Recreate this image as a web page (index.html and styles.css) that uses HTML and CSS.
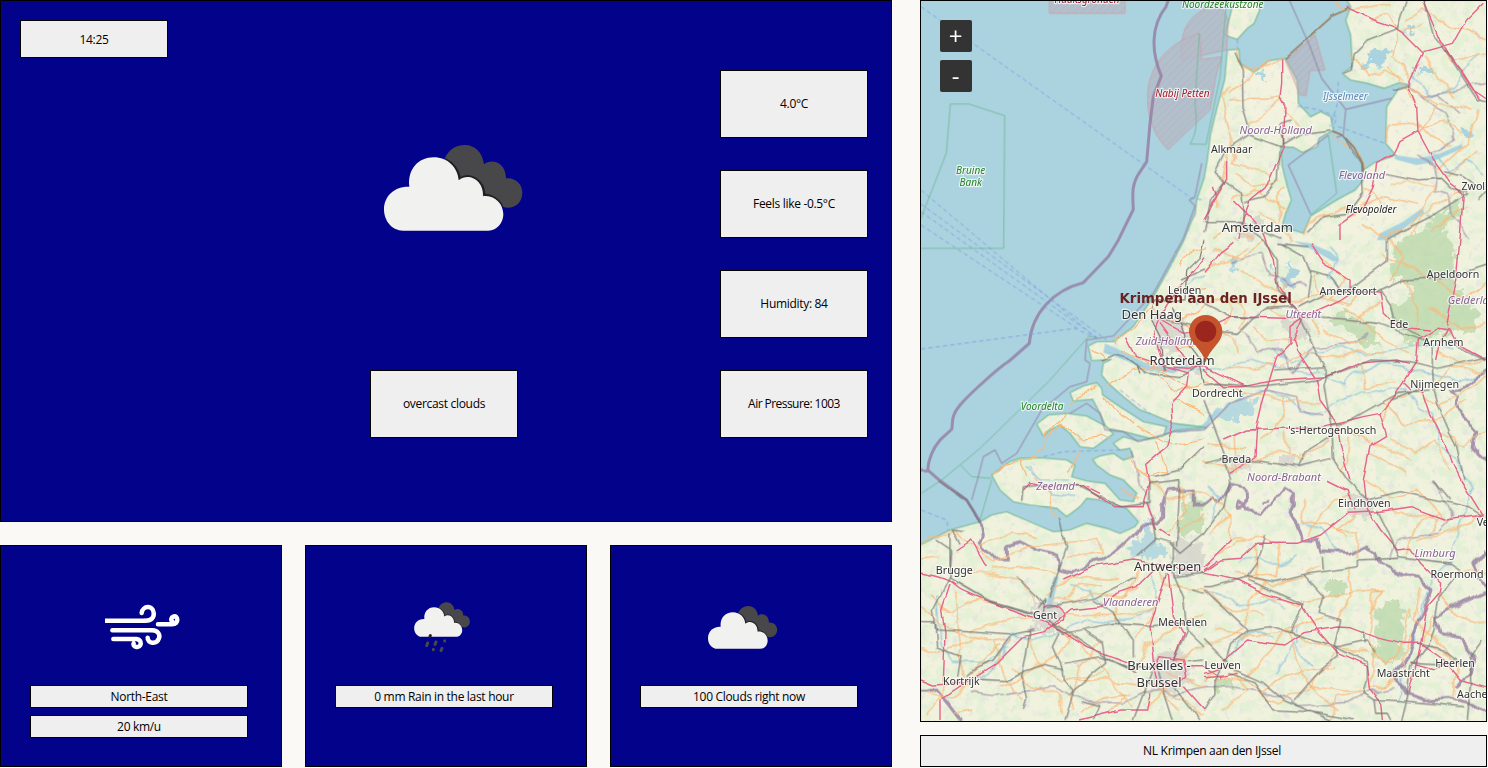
FILE: index.html
```html
<!DOCTYPE html>
<html lang="en">
<head>
<meta charset="utf-8">
<title>Weather</title>
<link rel="stylesheet" href="styles.css">
</head>
<body>
<main class="app">
  <div class="left">
    <section class="panel current">
      <div class="box time">14:25</div>
      <div class="sky">
        <svg class="sky-icon" viewBox="0 0 510 360">
          <g id="cloud">
            <path fill="#48484a" d="M222 92C232 62 255 45 285 45C315 45 338 68 342 103C365 84 408 97 408 145C435 142 457 162 457 188C457 214 439 233 413 233C405 233 397 229 390 224L250 190Z"/>
            <path fill="none" stroke="#202024" stroke-width="7" d="M226 88C248 98 266 120 269 147C300 126 341 150 343 194C365 195 387 209 396 228"/>
            <path fill="#f1f1f0" d="M99 302C66 302 42 273 42 238C42 200 72 168 118 170C112 118 145 82 191 82C233 82 263 112 266 151C298 126 341 152 339 199C371 193 400 220 400 253C400 278 382 302 355 302Z"/>
          </g>
        </svg>
        <div class="box tall">overcast clouds</div>
      </div>
      <div class="stats">
        <div class="box tall">4.0°C</div>
        <div class="box tall">Feels like -0.5°C</div>
        <div class="box tall">Humidity: 84</div>
        <div class="box tall pressure">Air Pressure: 1003</div>
      </div>
    </section>
    <div class="cards">
      <section class="panel card">
        <svg class="wind" viewBox="0 0 330 210" fill="none" stroke="#fff" stroke-width="13.500" stroke-linecap="round">
          <path stroke-linecap="butt" d="M45 92H166"/><path d="M166 92C186 92 193 80 191 68C189 45 158 46 155 69"/>
          <path d="M204 103H246C269 103 264 74 250 80C243 83 242 91 247 94"/>
          <path d="M67 121H187C204 121 211 134 207 145C199 166 172 160 173 143"/>
          <path d="M70 147H140C158 149 155 173 139 171C131 170 129 163 131 160"/>
        </svg>
        <div class="box">North-East</div>
        <div class="box">20 km/u</div>
      </section>
      <section class="panel card">
        <svg class="rain" viewBox="0 0 270 210">
          <use href="#cloud" transform="translate(25.500 18.500) scale(.403)"/>
          <g stroke="#48484a" stroke-width="9" stroke-linecap="round"><path d="M83 159L80 167M108 156L105 163M126 175L123 182M134 152V153M100 178V179"/><path stroke="#202024" d="M91 137L90 139"/></g>
        </svg>
        <div class="box">0 mm Rain in the last hour</div>
      </section>
      <section class="panel card">
        <svg class="clouds" viewBox="0 0 330 210"><use href="#cloud" transform="translate(33 25.500) scale(.5)"/></svg>
        <div class="box">100 Clouds right now</div>
      </section>
    </div>
  </div>

  <div class="right">
    <section class="map">
      <svg class="tiles" viewBox="3 3 1695 2160">
        <defs>
          <path id="land" d="M922 150L957 148L960 190L1002 217L1047 182L1095 175L1132 240L1135 310L1172 350L1202 335L1232 350L1240 390L1197 415L1192 440L1147 457L1120 442L1082 440L1087 500L1102 560L1114 600L1097 640L1084 685L1120 690L1150 700L1172 648L1250 600L1305 570L1330 540L1330 510L1365 487L1427 465L1397 430L1400 320L1437 265L1472 255L1437 248L1392 265L1342 250L1292 240L1267 220L1297 200L1292 105L1277 60L1292 20L1280 0H1704V2166H0V1635L90 1590L180 1565L215 1545L260 1535L340 1570L400 1595L450 1590L500 1570L560 1585L600 1600L645 1580L655 1565L620 1525L540 1500L500 1495L480 1520L440 1550L410 1525L330 1515L280 1505L240 1470L215 1425L270 1385L300 1375L360 1373L440 1380L465 1395L455 1430L500 1443L555 1450L600 1500L640 1505L650 1480L610 1440L570 1425L530 1395L518 1378L540 1368L580 1360L610 1380L640 1370L630 1345L600 1350L580 1330L610 1310L650 1322L710 1314L770 1290L860 1282L760 1270L690 1240L660 1230L610 1190L565 1150L545 1125L550 1090L575 1078L515 1082L505 1038L530 1025L580 1025L640 980L700 890L745 810L790 725L812 670L826 640L830 600L852 535L862 480L872 400L892 320L914 240Z
            M942 0L927 60L917 105L932 112L952 118L982 85L1002 70L1019 30L1012 0Z
            M450 1178L490 1158L530 1148L545 1165L548 1185L600 1220L670 1265L740 1280L730 1308L690 1315L620 1297L560 1285L540 1240L518 1198L460 1203Z
            M350 1272L385 1245L440 1240L500 1248L560 1280L580 1302L520 1345L480 1340L450 1300L420 1275L385 1293L370 1308Z"/>
          <clipPath id="landClip"><use href="#land"/></clipPath>
          <filter id="patches" x="0" y="0" width="100%" height="100%">
            <feTurbulence type="fractalNoise" baseFrequency=".03" numOctaves="6" seed="7"/>
            <feColorMatrix values="0 0 0 0 .7  0 0 0 0 .86  0 0 0 0 .62  0 8 0 0 -3.900"/>
          </filter>
          <filter id="towns" x="0" y="0" width="100%" height="100%">
            <feTurbulence type="fractalNoise" baseFrequency=".045" numOctaves="4" seed="21"/>
            <feColorMatrix values="0 0 0 0 .76  0 0 0 0 .76  0 0 0 0 .76  9 0 0 0 -5.600"/>
          </filter>
          <filter id="rough" x="-5%" y="-5%" width="110%" height="110%">
            <feTurbulence type="fractalNoise" baseFrequency=".035" numOctaves="4" seed="4"/>
            <feDisplacementMap in="SourceGraphic" scale="60" xChannelSelector="R" yChannelSelector="G"/>
          </filter>
          <filter id="wiggle" filterUnits="userSpaceOnUse" x="0" y="0" width="1704" height="2166" color-interpolation-filters="sRGB">
            <feTurbulence type="fractalNoise" baseFrequency=".016" numOctaves="2" seed="9"/>
            <feDisplacementMap in="SourceGraphic" scale="34" xChannelSelector="R" yChannelSelector="G"/>
          </filter>
          <filter id="wiggleLight" filterUnits="userSpaceOnUse" x="0" y="0" width="1704" height="2166" color-interpolation-filters="sRGB">
            <feTurbulence type="fractalNoise" baseFrequency=".014" numOctaves="2" seed="2"/>
            <feDisplacementMap in="SourceGraphic" scale="16" xChannelSelector="R" yChannelSelector="G"/>
          </filter>
          <pattern id="hatch" width="16" height="16" patternUnits="userSpaceOnUse" patternTransform="rotate(45)"><rect width="16" height="16" fill="#b9a9b8" fill-opacity=".8"/><path d="M0 0V16" stroke="#d98c94" stroke-width="4"/></pattern>
        </defs>
        <rect class="sea" width="1704" height="2166"/>
        <use href="#land" class="land"/>
        <g clip-path="url(#landClip)">
          <rect width="1704" height="2166" filter="url(#patches)" opacity=".5"/>
          <path fill="#f3f1df" opacity=".75" d="M1400 320L1437 265L1472 258L1540 340L1585 410L1570 440L1480 465L1430 463L1398 430ZM1340 510L1430 480L1560 500L1530 600L1420 670L1330 710L1260 700L1320 600ZM960 190L1000 217L1095 178L1130 240L1132 320L1080 400L1000 370L965 300Z"/>
          <rect width="1704" height="2166" filter="url(#towns)" opacity=".6"/>
          <g filter="url(#rough)">
            <path class="wood" d="M1425 715L1500 690L1560 690L1600 740L1604 850L1640 880L1680 950L1650 1000L1590 990L1520 1030L1450 1030L1460 990L1410 950L1420 915L1480 890L1460 840L1410 830ZM1220 950L1270 920L1290 970L1350 970L1385 1045L1330 1030L1270 985ZM1360 1830L1420 1790L1455 1825L1435 1990L1370 1980ZM1220 1740H1270V1790H1225ZM1520 670L1580 620L1630 600L1620 640L1560 700L1520 710ZM770 1560L820 1480L850 1500L850 1580L790 1620ZM880 2040H935V2070H880Z"/>
            <path class="town" d="M990 650L1030 660L1010 720H940L950 680ZM700 960L760 930L800 980L790 1060L720 1050ZM1080 960L1140 950L1170 1000L1110 1030ZM780 1070H850V1110L790 1120ZM760 1620L850 1630L840 1720L770 1730ZM690 1970L780 1950L820 2010L760 2090L690 2060ZM340 1810H420V1890H340ZM1290 1480L1380 1500L1340 1560L1290 1540ZM1060 1370L1130 1360L1150 1400H1070ZM930 1360H985V1410H930Z"/>
            <path class="lake" d="M1330 200L1360 155L1410 150L1395 180L1370 200ZM1485 215L1510 192L1535 215L1500 226ZM1620 385L1650 378L1660 398L1630 405ZM1092 810L1105 790L1120 810L1125 860L1090 850ZM1095 840L1125 830L1120 870L1090 865ZM920 790L950 770L945 805ZM1040 800L1055 785V820ZM1010 225L1030 215L1038 232ZM1445 95L1485 80L1470 108Z"/>
            <path class="lake" opacity=".8" d="M870 1250L920 1210L1000 1190L1005 1230L950 1260L890 1265ZM630 1640L660 1620L670 1570L700 1570V1620L745 1660V1680L690 1675L635 1678Z"/>
          </g>
          <path class="lake" d="M1425 465L1495 475L1560 460L1625 432L1628 445L1530 488L1490 495L1425 478ZM1380 700L1450 665L1505 625L1514 638L1460 680L1400 720H1370ZM1120 723L1170 730L1230 755L1260 780L1240 785L1180 750ZM375 1825L402 1730H416L395 1825ZM555 1030L600 1050L680 1090L760 1105L820 1090L760 1120L680 1108L600 1075L550 1058Z"/>
          <g class="river" filter="url(#wiggle)">
            <path class="wide" d="M740 1287L800 1288L850 1276L890 1240"/>
            <path d="M552 1055C620 1065 680 1130 740 1110S810 1100 850 1115L900 1100L980 1080L1060 1100L1130 1110L1200 1120L1270 1150L1320 1110L1380 1095L1450 1105L1530 1120L1600 1140L1704 1120M1060 1050L1120 1090L1200 1050L1260 1040L1330 1060L1400 1055L1460 1040L1520 1030L1600 1050M1010 1170L1100 1185L1150 1240L1220 1245L1260 1200L1330 1170L1400 1180L1450 1160L1500 1220L1540 1240L1560 1340L1620 1390L1660 1470L1620 1560L1590 1680L1540 1730L1500 1830L1480 1920L1450 2000L1440 2100"/>
            <path d="M1140 1560L1200 1590L1260 1660M960 1690L1010 1665L1080 1700L1130 1670M930 1970L960 1920L1010 1890L1060 1920M1060 2020L1090 1980L1120 1930L1150 1960L1180 2000M1140 1870L1130 1930M870 1780L980 1820L1050 1790L1090 1830M690 1730L720 1760L715 1820L640 1850L580 1870L500 1860L430 1890L340 1920L270 1900L230 2000L160 2040M50 1780L60 1930L100 1990L200 1990L260 1940M450 1760L510 1770L540 1820M460 1490L390 1480L360 1450L330 1400M320 1400L350 1440L450 1440M860 1450L900 1490L880 1560M1240 740L1250 790L1230 830L1260 870M850 820L800 850L820 910M1480 220L1530 290L1600 260L1670 160M1680 520L1640 480L1590 510L1540 470"/>
          </g>
        </g>
        <use href="#land" class="coast"/>

        <g class="zone"><path d="M388 0V40H615V0M782 180C780 100 800 50 860 25L895 0L925 60L920 150Z"/><path d="M838 100C740 130 680 200 683 300C684 360 705 410 744 449L870 330L890 220L905 170L845 178Z"/><path d="M1095 180L1185 105L1215 210L1170 212L1158 287L1140 285Z"/></g>
        <g class="reserve">
          <path d="M3 655L79 459L91 312H147L254 347L251 745H3M838 100L825 310C832 370 830 400 810 432L858 433L900 230L920 0M3 1480L65 1440L180 1345L390 1140L505 1010L530 1010M122 1395L155 1430L215 1435M215 1440L180 1560M1225 405L1250 580L1172 645"/>
        </g>
        <g class="border thick">
          <path d="M745 0L738 20C690 80 695 160 724 228L700 290L690 370L680 485L660 515C635 550 637 580 640 628L595 720L565 770L490 848C400 870 335 940 328 1030L265 1085C240 1100 150 1180 120 1215S100 1270 95 1288L60 1320C30 1355 25 1385 23 1410L60 1442L140 1500L180 1565"/>
          <path filter="url(#wiggle)" d="M180 1565L187 1600L180 1630L190 1650L220 1677H265V1640L300 1625L350 1650L410 1665L418 1705L460 1715L520 1685L550 1680L600 1640L650 1590L660 1570L710 1575L725 1560V1520L745 1475L820 1470V1515L850 1515L880 1490L900 1510L930 1455L975 1465L978 1520L950 1525L955 1500L985 1530L1030 1540L1060 1500L1080 1490L1095 1465L1120 1480V1510L1110 1540L1130 1570L1150 1615L1190 1620L1200 1655L1290 1660L1340 1635L1370 1650L1380 1690L1440 1725L1500 1735L1530 1770L1510 1830L1480 1900L1460 1970L1425 2020L1455 2080L1510 2100L1590 2095L1650 2110L1704 2140"/>
          <path filter="url(#wiggle)" d="M3 1410L23 1410M1704 1650L1665 1700L1700 1770L1600 1820L1550 1850L1560 1900L1620 1910L1660 1960L1650 2020L1610 2060M1704 1390L1665 1350L1670 1290L1635 1250L1600 1220L1610 1190L1590 1170L1630 1160L1670 1130L1704 1110M3 2080L50 2070L90 2120L125 2166M1030 1505L1043 1500"/>
        </g>
        <g class="border thin">
          <path d="M1108 0L1170 140L1205 235L1277 328L1415 295M1277 328L1270 405L1250 412M1225 405L1105 495L1172 643M845 490L825 590L808 600L825 618L790 715L700 880L580 1008L500 1020L495 1080L510 1090L500 1145L450 1160L365 1230L290 1360L245 1390L225 1350L190 1370L172 1440L155 1500M450 1240L500 1210L540 1240L555 1290L610 1295L655 1325L760 1295L852 1290L930 1210L1040 1170L1130 1190L1140 1235L1210 1245"/>
          <path filter="url(#wiggle)" d="M930 790L1030 760L1055 830L1110 860L1160 850M975 1000L1015 1060L1080 1050L1120 1120L1180 1040L1290 1030L1350 1000M1490 470L1550 500L1540 570L1590 580L1600 640L1650 720M1470 260L1510 290L1550 280L1620 340M1530 470L1600 420L1570 340L1510 290L1640 260L1704 250M1415 1680L1430 1620L1550 1600L1600 1550L1540 1440M640 1350L655 1420L700 1550M150 2080L220 2090L280 2080L400 2060L480 2100L600 2110L680 2070L760 2080L852 2060L930 2060L1060 2080L1130 2120L1290 2110L1350 2080L1420 2060"/>
        </g>
        <g class="ferry"><path d="M3 20L815 595L852 600M3 570L530 1015M3 612L560 1020M3 635L540 1020M3 675L480 990M3 1047L465 985L530 1015M1255 245L1250 320L1230 380M1132 318L1200 330L1250 350L1240 385M1255 380L1395 430M370 1370L430 1355L600 1350M600 1170L690 1240M3 1530L80 1560L85 1590M952 118V145"/></g>

        <g class="minor" filter="url(#wiggle)">
          <g transform="translate(852 0)"><path d="M100 150L110 190L150 217L243 175M80 260L50 290L80 430L60 530L40 620M75 280L200 180M75 297L200 290L230 285M135 375L235 290M240 330L300 385L230 405M100 430L85 490L200 520M90 520L150 560L230 540M80 600L150 570L200 600L250 640M170 640L230 670L260 720M290 710L350 650L440 620M430 640L560 590L640 610M480 560L540 620M470 670L560 720M560 550L690 550L650 640L560 710M640 370L740 440M650 380L560 370L545 430M650 390L710 360L770 400M615 260L700 310L800 330M500 60L550 40L580 90L570 170L620 230M440 160L500 230L540 210L600 240M430 30L560 10M600 60L660 30L700 60L846 120M590 100L660 70M700 110L740 180L846 160M660 160L710 240L750 290M700 310L680 350L650 400M700 510L790 430L820 330M730 530L820 450M385 400L460 450L478 510M390 0L430 30M610 700L690 620L780 570M690 700L720 650L790 620M30 720L80 680L150 710M240 560L215 600L230 660M550 200L640 300"/></g>
          <g transform="translate(852 720)"><path d="M0 90L80 60L130 20M30 30L110 60L180 0M110 100L180 130L260 180L380 160M90 170L130 220L110 270M0 190L60 170L90 200L60 250M150 250L190 310L280 290M50 280L90 300L100 340M60 370L140 390L210 370M230 380L300 340L430 350L460 330L540 340M360 60L420 120L380 180M330 100L350 170L440 200L470 150M450 240L530 180M430 210L560 310L620 340M360 270L430 310L480 300M470 370L480 440L570 430M0 420L70 440L190 470L350 490M230 460L240 520L170 600M240 570L255 650M90 590L100 700M10 620L130 620M0 660L90 690L200 640L300 650L370 600M400 560L500 600L620 660M430 590L420 700M540 490L600 550L700 540L790 480M560 600L640 640L690 600L740 690M530 40L700 120L780 180L846 130M560 0L600 50L560 120M600 120L640 200L630 280M680 200L780 270L846 250M690 330L780 380L846 360M640 440L700 500L780 450L846 410M700 570L780 620L846 560M500 640L600 700M700 440L740 380L846 400M620 460L560 480L540 550M250 130L200 210L260 240M300 220L350 280"/></g>
          <g transform="translate(0 720)"><path d="M585 305L640 260L690 200L720 220M600 330L680 370L740 390M560 440L640 390L700 380L800 440L852 450M450 500L530 430M545 470L640 550M370 590L430 540L440 520M355 640L375 600L430 550L490 600L570 590M215 700L300 660L350 655M300 660L320 710M440 700L480 620M700 400L770 460L850 430M650 560L760 620L852 600M700 600L740 700M620 640L680 710L740 690M750 480L852 520M520 330L555 355M780 80L820 30L852 20M730 180L780 150L852 140M740 240L852 280M780 250L852 190M770 330L852 320"/></g>
          <g transform="translate(0 1440)"><path d="M3 195L90 150L170 200L210 250L280 220L330 200L420 190L540 175L550 220L440 235M210 270L330 260L420 280M0 240L60 235M180 200L280 150L350 170M130 270L210 280L300 300L350 360M100 330L110 420L130 600M30 340L80 400L170 360L230 370M0 380L70 440L200 480L270 470M240 490L180 550L140 590M150 450L230 430L340 400M220 480L250 580L300 660M390 370L520 340L620 350L650 270M380 350L460 290L600 300M430 360L480 310L550 320M430 400L560 410L640 400L720 380M400 430L450 480L420 520L310 590L240 620M330 470L360 560L420 600L550 580M420 430L540 560L640 680M270 560L330 620L420 640L430 700M0 500L50 520L180 470M0 640L100 650L180 570M20 700L80 610L150 620M100 700L160 690M460 600L560 600L680 620M480 700L550 650L630 640M550 480L480 560L450 690M580 430L600 360L650 320M650 480L690 420L720 350M640 580L680 500L760 440L852 400M700 250L750 320L852 330M780 160L852 100M780 20L800 90L750 160M690 0L740 60L852 30M600 30L650 50M760 540L852 500M690 610L780 690M720 620L852 700M740 580L852 620M750 600L690 680M340 0L390 40L415 110M620 640L560 700"/></g>
          <g transform="translate(852 1440)"><path d="M0 30L80 100L80 180L180 170L230 200L220 290L130 290M80 100L20 160M130 180L30 220M300 60L290 120L380 140L420 170M310 160L390 60L440 50M460 100L390 150L460 160L460 230M480 0L560 50L640 30L730 130M540 60L580 100L700 120L680 160M640 180L720 160L840 110M610 220L640 130L700 100M150 200L160 300L200 320L290 290L350 260M100 270L180 310L130 360L130 440L50 490L0 490M170 340L280 380L300 360L430 340L540 330M430 250L440 350L400 420M360 350L430 340M490 490L510 340L540 330L500 390M620 380L600 480L550 560L490 490M110 470L250 460L380 500L490 510M250 460L320 620L390 520M30 590L130 600L220 670L320 620L490 640M170 640L230 590L390 560M320 620L400 690M480 640L400 650L380 720M510 500L500 630L580 600M650 320L630 420L700 480L740 540M700 340L760 410L846 430M620 460L590 540L630 600M690 500L760 560L750 650M690 400L660 510M740 280L846 280M540 620L600 570M0 330L60 380L170 400M30 450L120 460M0 600L60 540L130 630L60 690M100 600L160 560L250 450L350 410"/></g>
        </g>
        <g class="major" filter="url(#wiggleLight)">
          <path d="M0 1719C60 1730 90 1740 110 1760S300 1840 380 1865L500 1940L630 1990M90 1755L65 1830L75 1900L70 2050M60 2160L60 2100L120 2060L230 1990L310 1910L370 1895L450 1830L540 1820L590 1780L650 1760L700 1710L760 1690M430 1740L520 1700L640 1680L750 1700L852 1720M110 1650L155 1620L200 1700M705 2000L690 1880L740 1720M745 1720L760 1850L790 1900L760 1980M700 2010L720 1970L790 1980L800 2030L770 2060L710 2050L700 2010M800 2000H852L900 2030L950 2020M790 2060L852 2130M3 2040L40 2055L130 2050M480 2160L600 2130L680 2130L690 2080M370 1820C400 1800 440 1830 430 1860L390 1880M310 1470L330 1450L370 1460L490 1460L580 1520H670L690 1450L680 1390L740 1340L760 1270L755 1210L800 1160L805 1120L740 1100L650 1070L620 1010M500 1460L540 1480M720 1590L750 1610"/>
          <path d="M735 1110L700 1000L720 950L770 870L830 800L852 770M740 1100L800 1105L852 1100L980 1160M720 960L790 1000L852 990L940 950L1100 955L1150 950L1260 900L1290 880M720 970L800 1080M852 820L900 760L940 730M870 620L920 540L920 480M852 660L890 590L880 560M1085 175V250L1080 290L1095 320L1090 440L1040 560L990 600L970 650L960 720M940 600L990 650L1030 700L1060 780L1070 850L1100 900L1150 950L1120 1020L1130 1050L1190 1140L1200 1200L1250 1270L1260 1330L1290 1440M1150 950L1110 980L1110 1030L1070 1070L1030 1200L1010 1280L1005 1370L930 1420M852 1110L910 1160L970 1160L1070 1140L1220 1130L1310 1090L1430 1080L1470 1090M910 1320L980 1290L1080 1285H1180L1290 1260L1330 1250L1380 1240L1420 1190L1490 1080L1495 1020L1550 985L1590 990L1610 1030L1704 1080M1290 870L1380 880L1390 940L1430 980L1530 990M1170 730L1210 790L1290 840L1290 870M1580 980L1610 820L1620 720M1490 1160L1510 1180L1530 1240L1580 1340L1600 1400L1620 1440M1470 1170L1450 1150M1380 1240L1400 1310L1350 1340L1330 1440M1585 990L1560 1030L1550 1080M1280 20L1320 40L1360 60L1420 80L1450 100L1510 160L1490 200L1465 255L1490 320L1494 395L1440 425L1420 465L1370 490L1360 560L1330 620L1260 670L1260 720M1510 155L1600 130L1640 60L1690 10M1494 395L1540 480L1590 550L1630 580L1620 720M1510 0L1560 120L1660 270L1704 300M1574 150L1630 220L1680 300M680 1510L710 1590"/>
          <g transform="translate(852 1440)"><path d="M0 275L50 240L110 235L160 190H280L350 165L430 100L520 95L620 80L730 120L830 105M0 280L100 300L180 340L290 375L340 450L400 520L490 560L500 630L530 670L535 720M0 580L70 560M60 540L130 480L240 495L300 455L400 438L440 440L520 470L600 490H650L720 540L770 600L846 620M370 0L430 30L450 90M480 0L490 90L530 150L580 210L620 205L650 250L710 310L705 340L670 380L650 490L640 540L615 640M770 0L835 105M40 240L0 270M0 260L80 180M620 550L690 570L720 550M0 590L60 585"/></g>
        </g>
        <g class="rail" filter="url(#wiggleLight)">
          <g transform="translate(852 0)"><path d="M90 155L115 210L117 320L133 375L130 405L65 450L30 520L65 550L110 580L118 630L115 670L180 720M133 405L230 440L300 400L380 390M260 360L230 370L240 435M225 450L220 540L180 590L120 605M60 550L20 600L0 700M0 665H110L230 715M385 393L415 405L470 490L475 580L430 640L360 650L310 700M545 520L640 540L710 535L740 565L790 575M720 515L780 530L820 560M790 580L680 650L600 690L550 718M820 600L846 570M660 0L690 110L740 175L820 300L846 305M606 0L580 85L490 120L450 160L445 210L415 220M618 256L570 270"/></g>
          <g transform="translate(852 720)"><path d="M180 0L220 60L220 150L280 215L370 400L360 440L380 550L385 650L430 720M230 10L300 50L320 100L310 170M220 10L310 20M320 95L380 110L410 150M280 200L350 165L430 150L550 60L550 0M410 155H520L600 120L740 110L846 75M525 150L560 200L570 240L650 290M300 230L420 240L520 250L680 310M0 190L80 230L150 235L190 205L270 200M0 270L100 280L150 230M0 435L40 430L150 440L340 420L420 390L500 360L620 365L700 385L846 350M685 320V380L690 450L700 490L760 630L780 720M680 450L580 460L420 550L380 555M740 310L846 360M0 480L60 640L80 720M60 655L0 670M50 655L180 665L280 680L380 655M280 680L300 640L380 590M240 190V160M210 390L365 380M640 450L560 480"/></g>
          <g transform="translate(0 720)"><path d="M852 0L840 50L800 90L795 180L700 180L690 230L720 290L730 390M852 370L780 410L680 400L620 355L585 345L545 360M852 370L800 300L760 200M660 400L650 375M852 430L840 370M852 620L780 690L700 710M780 120L852 90M730 240L852 270"/></g>
          <g transform="translate(0 1440)"><path d="M60 0L140 60L180 125M50 180L95 210L90 295L210 365L370 410L460 465L570 540L650 580M90 160L90 290L40 390L50 450L140 455L270 465L340 450M0 425H45L50 500L120 530L110 590M120 190L100 150L135 155M105 305L200 360L350 400M140 590L160 570L220 540L270 470M180 595L265 600L310 575L370 555L430 570M380 410L430 460L580 430L700 440L780 430L852 440M380 380L520 355L650 290M515 360L580 400L640 480V530M370 370L290 290M370 400L375 355L355 380M420 460L400 500L425 560L430 600L460 635L435 720M430 550L540 530L620 560L700 560M490 450L550 490L560 550L450 640M330 450L320 520L305 590L320 660L310 690M480 665L540 680L520 720M760 280L790 350L800 450L760 540M750 190L780 220L852 160M780 0L770 200M760 290L852 280M820 330L852 340M800 450L852 500M800 545L852 540M695 575L640 720M710 560L760 720M760 620L840 720M650 230L710 175L760 190V280M700 110L710 180M305 60L310 20L370 15L480 20L600 80L690 70V10L780 0M430 170L440 200L390 350M415 110L430 180"/></g>
          <g transform="translate(852 1440)"><path d="M75 0L60 80L0 165M430 0L490 60L590 35L700 60L790 80L835 110M520 90L550 150L585 230L740 250L770 270L705 350L690 450L675 490L620 560L610 640L590 720M585 235L460 240V260L290 285L210 305L130 290L20 320H0M185 165L160 250L130 290M0 330L130 450L80 490L65 540L30 600V640L0 690M130 450L200 440L400 500L490 480L510 520M300 285L360 350L345 400L410 420L390 500L490 550V600L480 640L510 660L550 660L620 665L780 680M130 300L300 375L270 430L260 460M395 500L400 530L350 570L270 660M0 475L65 540L90 570L180 610L240 660L380 720M70 580L150 605L210 690L320 695L450 720M640 490L700 500L780 560M620 550L710 555M835 480L800 530V600L790 720M690 0L740 60M480 450V490M355 230L358 270M510 660L515 700H550L560 720"/></g>
          <path class="dam" d="M1095 175L1235 50L1290 25M1237 393L1270 407L1300 440L1325 490L1328 510"/>
        </g>

        <g class="lb sm"><text x="935" y="460">Alkmaar</text><text x="794" y="883">Leiden</text><text x="1284" y="886">Amersfoort</text><text x="1599" y="834">Apeldoorn</text><text x="1437" y="985">Ede</text><text x="1570" y="1038">Arnhem</text><text x="1544" y="1164">Nijmegen</text><text x="892" y="1190">Dordrecht</text><text x="1237" y="1301">'s-Hertogenbosch</text><text x="949" y="1389">Breda</text><text x="1333" y="1520">Eindhoven</text><text x="1611" y="1734">Roermond</text><text x="103" y="1721">Brugge</text><text x="375" y="1856">Gent</text><text x="788" y="1878">Mechelen</text><text x="908" y="2007">Leuven</text><text x="1450" y="2031">Maastricht</text><text x="1605" y="2000">Heerlen</text><text x="124" y="2056">Kortrijk</text><text x="1673" y="571">Zwolle</text><text x="1667" y="2095">Aachen</text><text x="1712" y="1578">Venlo</text></g>
        <g class="lb lg"><text x="1012" y="695">Amsterdam</text><text x="695" y="956">Den Haag</text><text x="786" y="1094">Rotterdam</text><text x="743" y="1713">Antwerpen</text><text x="717" y="2011">Bruxelles -</text><text x="717" y="2061">Brussel</text></g>
        <g class="lb prov"><text x="1067" y="402">Noord-Holland</text><text x="1326" y="537">Flevoland</text><text x="1150" y="954">Utrecht</text><text x="742" y="1034">Zuid-Holland</text><text x="1664" y="911">Gelderland</text><text x="1092" y="1443">Noord-Brabant</text><text x="1545" y="1670">Limburg</text><text x="407" y="1471">Zeeland</text><text x="632" y="1818">Vlaanderen</text></g>
        <g class="lb nature"><text x="152" y="522">Bruine</text><text x="152" y="558">Bank</text><text x="366" y="1231">Voordelta</text><text x="908" y="24">Noordzeekustzone</text><text class="red" x="501" y="9">Haaksgronden</text><text class="red" x="787" y="291">Nabij Petten</text><text class="water" x="1276" y="301">IJsselmeer</text><text class="polder" x="1353" y="640">Flevopolder</text></g>
        <path fill="#c5542d" d="M857 1088C846 1045 807 1030 807 994A50 49 0 0 1 907 994C907 1030 869 1045 857 1088Z"/>
        <circle cx="857" cy="994" r="32" fill="#9b261e"/>
        <text class="pin-name" x="857" y="908" textLength="517" lengthAdjust="spacingAndGlyphs">Krimpen aan den IJssel</text>
      </svg>
      <div class="zoom"><button>+</button><button>-</button></div>
    </section>
    <div class="box place">NL Krimpen aan den IJssel</div>
  </div>
</main>
</body>
</html>
```
FILE: styles.css
```css
* { box-sizing: border-box; }
body { margin: 0; background: #faf9f5; font: 12px "Open Sans", "Noto Sans", sans-serif; color: #000; overflow: hidden; }
.app { display: flex; gap: 28px; width: 1487px; height: 768px; }
.left { width: 892px; display: flex; flex-direction: column; gap: 23px; }
.panel { background: #03028b; border: 1px solid #000; }
.current { height: 522px; padding: 19px; display: grid; grid-template-columns: repeat(3, 148px); column-gap: 202px; align-items: start; }
.box { height: 23px; display: flex; align-items: center; justify-content: center; background: #efefef; border: 1px solid #000; white-space: nowrap; letter-spacing: -.31px; }
.box.time { height: 38px; }
.box.tall { height: 68px; padding-bottom: 2px; }
.box.pressure { letter-spacing: -.55px; }
.sky { padding-top: 110px; }
.sky-icon { display: block; width: 170px; height: 120px; margin-bottom: 120px; }
.stats { padding-top: 50px; display: flex; flex-direction: column; gap: 32px; }
.cards { display: grid; grid-template-columns: repeat(3, 282px); gap: 23px; }
.card { height: 222px; padding: 44px 33px 0 29px; display: flex; flex-direction: column; }
.card svg { height: 70px; margin-bottom: 25px; flex: none; }
.card .box + .box { margin-top: 7px; }
.wind { width: 110px; margin-left: 60px; }
.rain { width: 90px; margin-left: 65px; }
.clouds { width: 110px; margin-left: 50px; }
.right { width: 567px; }
.map { position: relative; height: 722px; border: 1px solid #000; overflow: hidden; }
.tiles { display: block; width: 565px; height: 720px; }
.box.place { height: 32px; margin-top: 13px; padding: 0 0 2px 17px; }
.zoom { position: absolute; left: 19px; top: 19px; display: grid; gap: 8px; }
.zoom button { width: 32px; height: 32px; padding: 0 1px 0 0; border: 0; border-radius: 2px; background: #333; color: #fff; font: 24px/32px "Open Sans", sans-serif; }

.sea, .lake { fill: #aad3df; }
.land { fill: #f0f2dd; }
.coast { fill: none; stroke: #72b795; stroke-width: 4; opacity: .8; }
.wood { fill: #add19e; opacity: .6; }
.town { fill: #d0cdc9; opacity: .65; }
.river, .border, .ferry, .minor, .major, .rail, .reserve { fill: none; stroke-linejoin: round; }
.river { stroke: #a2cddd; stroke-width: 4; }
.river .wide { stroke: #aad3df; stroke-width: 16; }
.reserve { stroke: #72b795; stroke-width: 3; opacity: .85; }
.zone { fill: url(#hatch); stroke: #dc8088; stroke-width: 3; opacity: .55; }
.border { stroke: #947a9f; }
.border.thick { stroke-width: 9; opacity: .78; }
.border.thin { stroke-width: 4; opacity: .65; }
.ferry { stroke: #7e98e5; stroke-width: 3; stroke-dasharray: 13 9; opacity: .8; }
.minor { stroke: #fcb878; stroke-width: 3.6; }
.major { stroke: #e6658a; stroke-width: 4.3; }
.rail { stroke: #777; stroke-width: 3.8; opacity: .9; }
.dam { stroke: #947451; stroke-width: 5; }
.lb { font-family: "Noto Sans", sans-serif; text-anchor: middle; fill: #333; stroke: #fff; stroke-opacity: .7; stroke-width: 7; stroke-linejoin: round; paint-order: stroke; }
.sm { font-size: 32px; }
.lg { font-size: 39px; }
.prov { font-size: 33px; font-style: italic; fill: #8a6393; }
.nature { font-size: 30px; font-style: italic; fill: #238423; }
.red { fill: #a31c26; }
.water { fill: #5a88b4; }
.polder { fill: #222; }
.pin-name { font: bold 44px "DejaVu Sans", sans-serif; text-anchor: middle; fill: #6b2222; }
```
